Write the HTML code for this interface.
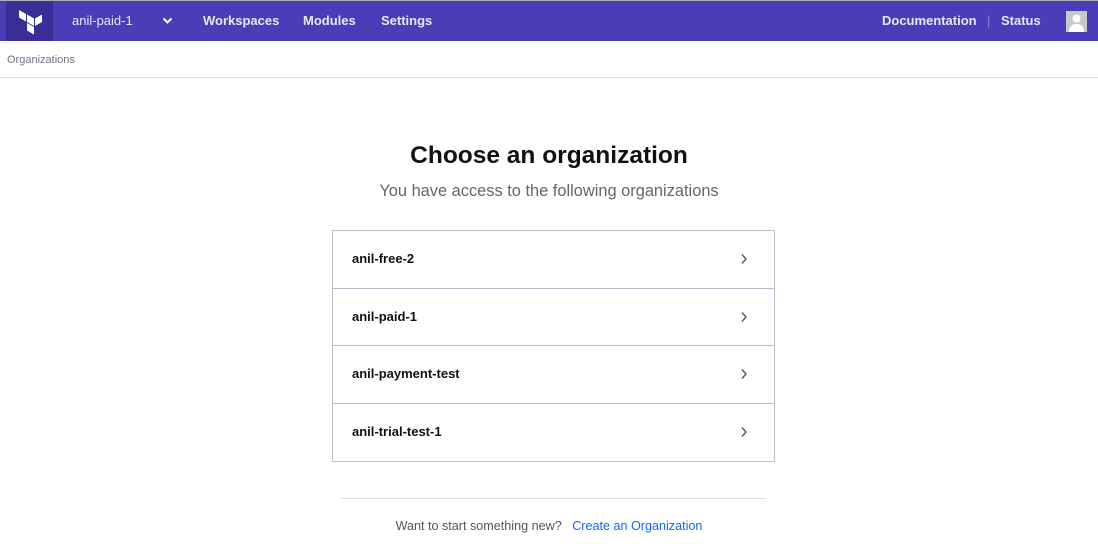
<!DOCTYPE html>
<html><head><meta charset="utf-8"><style>
*{box-sizing:border-box;margin:0;padding:0}
body{width:1098px;height:552px;overflow:hidden;background:#fff;font-family:"Liberation Sans",sans-serif;position:relative}
.top{position:absolute;left:0;top:0;width:1098px;height:1px;background:#b0b0b0}
.nav{position:absolute;left:0;top:1px;width:1098px;height:40px;background:#4b3db8;color:#e8e6fa;font-size:13px;font-weight:bold}
.logo{position:absolute;left:6px;top:0;width:47px;height:40px;background:#3a2d96}
.nav span{position:absolute;top:12px}
.bc{position:absolute;left:0;top:41px;width:1098px;height:37px;border-bottom:1px solid #dcdce2;font-size:11px;color:#6f7682;padding:13px 0 0 7px}
h1{position:absolute;left:0;width:1098px;top:142px;text-align:center;font-size:24.5px;font-weight:bold;color:#111}
.sub{position:absolute;left:0;width:1098px;top:182px;text-align:center;font-size:16.4px;color:#666}
.list{position:absolute;left:332px;top:230px;width:443px;border:1px solid #b9bccb}
.row{height:57.5px;border-bottom:1px solid #b9bccb;position:relative;font-size:13px;font-weight:bold;color:#111;padding:20px 0 0 19px}
.row:last-child{border-bottom:none}
.row svg{position:absolute;right:26px;top:22px}
.hr{position:absolute;left:341px;top:498px;width:425px;height:1px;background:#dcdce2}
.foot{position:absolute;left:0;width:1098px;top:519px;text-align:center;font-size:12.6px;color:#555}
.foot a{color:#1563ff;text-decoration:none;margin-left:7px}
</style></head><body>
<div class="top"></div>
<div class="nav">
<div class="logo"><svg width="47" height="40" viewBox="0 0 47 40"><g fill="#fff"><path d="M13 9l7 4v7.5l-7-4z"/><path d="M21 13.5l7 4v7.5l-7-4z"/><path d="M29 17.5l7-4V21l-7 4z"/><path d="M21 22l7 4v7.5l-7-4z"/></g></svg></div>
<span style="left:72px;font-weight:normal">anil-paid-1</span>
<svg style="position:absolute;left:162px;top:16px" width="11" height="8" viewBox="0 0 11 8"><path d="M1.5 1.5l4 4 4-4" stroke="#fff" stroke-width="2" fill="none"/></svg>
<span style="left:203px">Workspaces</span>
<span style="left:303px">Modules</span>
<span style="left:381px">Settings</span>
<span style="left:882px">Documentation</span>
<span style="left:987px;font-weight:normal;color:#8f86d6">|</span>
<span style="left:1001px">Status</span>
<div style="position:absolute;left:1066px;top:10px;width:21px;height:21px;background:#c8c8c8"><svg width="21" height="21" viewBox="0 0 21 21"><circle cx="10.5" cy="7.5" r="4" fill="#fff"/><path d="M3 21c0-6 3-8 7.5-8s7.5 2 7.5 8z" fill="#fff"/></svg></div>
</div>
<div class="bc">Organizations</div>
<h1>Choose an organization</h1>
<div class="sub">You have access to the following organizations</div>
<div class="list">
<div class="row">anil-free-2<svg width="8" height="12" viewBox="0 0 8 12"><path d="M2 1.5l4 4.5-4 4.5" stroke="#555" stroke-width="1.4" fill="none"/></svg></div>
<div class="row">anil-paid-1<svg width="8" height="12" viewBox="0 0 8 12"><path d="M2 1.5l4 4.5-4 4.5" stroke="#555" stroke-width="1.4" fill="none"/></svg></div>
<div class="row">anil-payment-test<svg width="8" height="12" viewBox="0 0 8 12"><path d="M2 1.5l4 4.5-4 4.5" stroke="#555" stroke-width="1.4" fill="none"/></svg></div>
<div class="row">anil-trial-test-1<svg width="8" height="12" viewBox="0 0 8 12"><path d="M2 1.5l4 4.5-4 4.5" stroke="#555" stroke-width="1.4" fill="none"/></svg></div>
</div>
<div class="hr"></div>
<div class="foot">Want to start something new? <a>Create an Organization</a></div>
</body></html>
